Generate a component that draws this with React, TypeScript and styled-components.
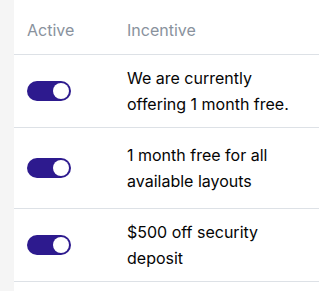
import React from 'react'
import styled,{createGlobalStyle} from 'styled-components'

const GlobalStyle=createGlobalStyle`
html,body{
margin:0;
padding:0;
background:#ffffff;
}
body{
font-family:Inter,"Noto Sans",sans-serif;
-webkit-font-smoothing:antialiased;
}
`

interface IIncentive{
    id:number;
    active:boolean;
    text:string;
    minHeight?:number;
}

const incentives:IIncentive[]=[
    {id:1,active:true,text:'We are currently offering 1 month free.'},
    {id:2,active:true,text:'1 month free for all available layouts',minHeight:80},
    {id:3,active:true,text:'$500 off security deposit'},
]

const Toggle:React.FC<{on:boolean}>=({on}):React.ReactElement=>(
    <Track on={on} role='switch' aria-checked={on}>
        <Knob />
    </Track>
)

export default function App():React.ReactElement{
    return (
        <>
            <GlobalStyle />
            <Page>
                <Sidebar />
                <Table>
                    <HeaderRow>
                        <ActiveCell>Active</ActiveCell>
                        <TextCell>Incentive</TextCell>
                    </HeaderRow>
                    {incentives.map(item=>(
                        <Row key={item.id} minHeight={item.minHeight}>
                            <ActiveCell>
                                <Toggle on={item.active} />
                            </ActiveCell>
                            <TextCell>{item.text}</TextCell>
                        </Row>
                    ))}
                </Table>
            </Page>
        </>
    )
}

const Page=styled.div`
display:flex;
width:319px;
height:291px;
overflow:hidden;
`

const Sidebar=styled.div`
width:14px;
flex-shrink:0;
background:#f5f5f5;
`

const Table=styled.div`
flex:1;
display:flex;
flex-direction:column;
`

const RowBase=styled.div`
display:grid;
grid-template-columns:100px 1fr;
border-bottom:1px solid #dde1e6;
`

const HeaderRow=styled(RowBase)`
padding:17px 0 11px;
font-size:16px;
line-height:26px;
color:#89929d;
`

const Row=styled(RowBase)<{minHeight?:number}>`
align-items:center;
min-height:${({minHeight})=>minHeight??72}px;
box-sizing:content-box;
font-size:16px;
line-height:26px;
color:#050505;
`

const ActiveCell=styled.div`
display:flex;
align-items:center;
padding-left:13px;
`

const TextCell=styled.div`
padding:0 8px 0 13px;
`

const Track=styled.div<{on:boolean}>`
display:flex;
align-items:center;
justify-content:${({on})=>on?'flex-end':'flex-start'};
width:44px;
height:20px;
padding:0 2px;
box-sizing:border-box;
border-radius:10px;
background:${({on})=>on?'#2d1a8e':'#cfd3d8'};
`

const Knob=styled.div`
width:16px;
height:16px;
border-radius:50%;
background:#ffffff;
`
